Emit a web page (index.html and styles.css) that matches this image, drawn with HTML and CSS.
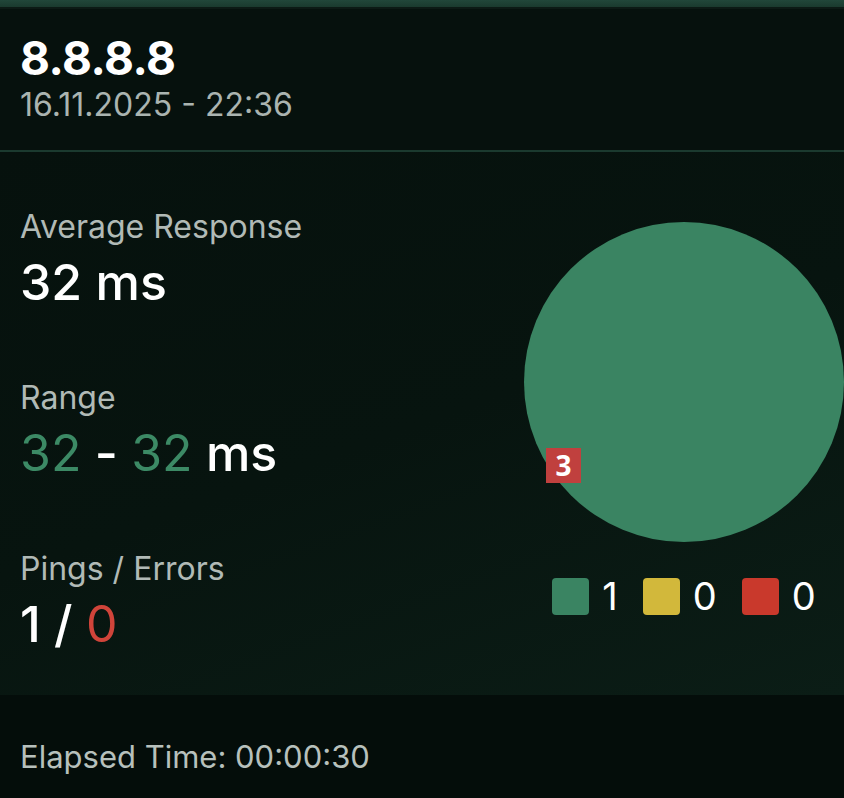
FILE: index.html
```html
<!DOCTYPE html>
<html lang="en">
<head>
<meta charset="utf-8">
<title>8.8.8.8 ping</title>
<link rel="stylesheet" href="styles.css">
</head>
<body>
<div class="card">
  <div class="topbar"></div>
  <header class="header">
    <div class="host">8.8.8.8</div>
    <div class="date">16.11.2025 - 22:36</div>
  </header>
  <section class="content">
    <div class="stats">
      <div class="stat">
        <div class="label">Average Response</div>
        <div class="value">32 ms</div>
      </div>
      <div class="stat">
        <div class="label">Range</div>
        <div class="value"><span class="good">32</span> - <span class="good">32</span> ms</div>
      </div>
      <div class="stat">
        <div class="label">Pings / Errors</div>
        <div class="value">1 / <span class="bad">0</span></div>
      </div>
    </div>
    <div class="chart">
      <div class="pie">
        <svg width="320" height="320" viewBox="0 0 320 320">
          <circle cx="160" cy="160" r="160" fill="#3a8462"/>
        </svg>
        <span class="badge">3</span>
      </div>
      <div class="legend">
        <div class="item"><span class="sw sw-green"></span><span class="num">1</span></div>
        <div class="item"><span class="sw sw-yellow"></span><span class="num">0</span></div>
        <div class="item"><span class="sw sw-red"></span><span class="num">0</span></div>
      </div>
    </div>
  </section>
  <footer class="footer">Elapsed Time: 00:00:30</footer>
</div>
</body>
</html>
```
FILE: styles.css
```css
html, body {
  margin: 0;
  padding: 0;
}
body {
  background: #05100c;
  font-family: "Inter", "Noto Sans", sans-serif;
  color: #ffffff;
  width: 844px;
  height: 798px;
  overflow: hidden;
}
.card {
  display: flex;
  flex-direction: column;
  height: 798px;
}
.topbar {
  height: 7px;
  background: linear-gradient(#21473a, #1a3a2e);
  border-bottom: 2px solid #0c1a15;
}
.header {
  padding: 22px 20px 0;
  height: 119px;
  border-bottom: 2px solid #1b3a2f;
  background: #06110d;
}
.host {
  font-size: 46px;
  font-weight: 700;
  line-height: 54px;
  letter-spacing: -0.5px;
}
.date {
  font-size: 32px;
  line-height: 36px;
  margin-top: 2px;
  color: #aab4b0;
}
.content {
  display: flex;
  justify-content: space-between;
  height: 543px;
  background: linear-gradient(160deg, #06110d 0%, #07140f 50%, #0b1d16 100%);
}
.stats {
  padding: 55px 0 0 20px;
  display: flex;
  flex-direction: column;
  gap: 68px;
}
.label {
  font-size: 32px;
  line-height: 40px;
  color: #b1bab6;
}
.value {
  font-size: 50px;
  font-weight: 500;
  line-height: 56px;
  margin-top: 7px;
}
.good { color: #3c8a65; font-weight: 400; }
.bad { color: #d0443a; font-weight: 400; }
.chart {
  width: 320px;
  padding-top: 70px;
  display: flex;
  flex-direction: column;
  align-items: center;
}
.pie {
  position: relative;
  width: 320px;
  height: 320px;
}
.pie svg { display: block; }
.badge {
  position: absolute;
  left: 22px;
  top: 226px;
  width: 35px;
  height: 35px;
  background: #c0403e;
  color: #fff;
  font-family: "Open Sans", "Inter", sans-serif;
  font-weight: 700;
  font-size: 28px;
  line-height: 35px;
  text-align: center;
}
.legend {
  display: flex;
  gap: 25px;
  margin-top: 36px;
}
.item {
  display: flex;
  align-items: center;
  gap: 13px;
}
.sw {
  width: 37px;
  height: 37px;
  border-radius: 4px;
}
.sw-green { background: #3a8462; }
.sw-yellow { background: #d2b83b; }
.sw-red { background: #c9392c; }
.num {
  font-size: 38px;
  line-height: 37px;
}
.footer {
  flex: 1;
  background: #040d0a;
  padding: 43px 20px 0;
  font-size: 31px;
  line-height: 38px;
  color: #b7c0bc;
}
```
